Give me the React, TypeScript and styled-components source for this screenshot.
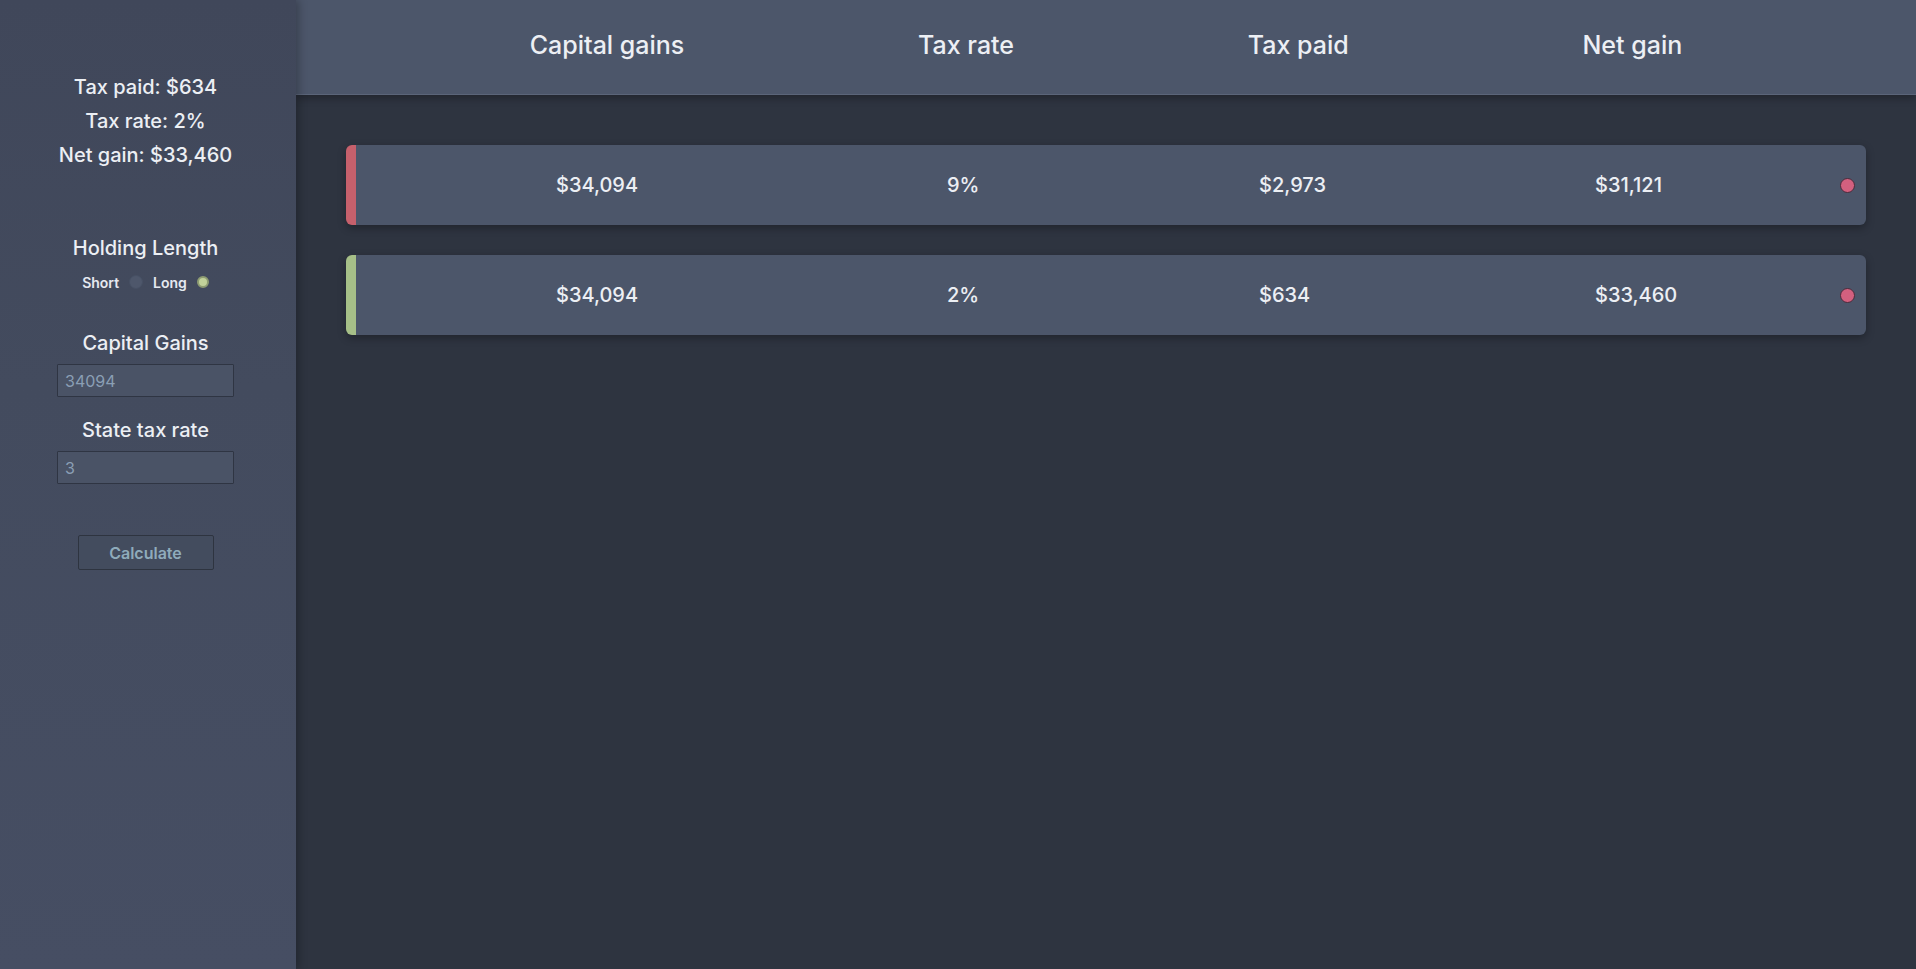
import React from "react";
import styled, { createGlobalStyle } from "styled-components";

const GlobalStyle = createGlobalStyle`
  html, body { margin: 0; padding: 0; background: #2e3440; }
  body { font-family: "Inter", "Noto Sans", sans-serif; color: #eceff4; }
  * { box-sizing: border-box; }
`;

const Page = styled.div`
  display: flex;
  min-height: 969px;
  background: #2e3440;
`;

const Sidebar = styled.aside`
  width: 296px;
  flex-shrink: 0;
  background: linear-gradient(180deg, #40475a 0%, #434b5e 40%, #464e63 100%);
  box-shadow: 3px 0 8px rgba(0, 0, 0, 0.25);
  display: flex;
  flex-direction: column;
  align-items: center;
  padding: 70px 5px 0 0;
  position: relative;
  z-index: 2;
`;

const Stats = styled.div`
  display: flex;
  flex-direction: column;
  align-items: center;
`;

const StatLine = styled.div`
  font-size: 20px;
  font-weight: 500;
  line-height: 34px;
  color: #eceff4;
`;

const SectionTitle = styled.div<{ $mt: number }>`
  margin-top: ${(p) => p.$mt}px;
  font-size: 20px;
  font-weight: 500;
  line-height: 30px;
  color: #eceff4;
`;

const RadioRow = styled.div`
  margin-top: 11px;
  height: 16px;
  display: flex;
  align-items: center;
  font-size: 14px;
  font-weight: 600;
  color: #e5e9f0;
`;

const RadioLabel = styled.span`
  margin-right: 10px;
`;

const RadioDot = styled.span<{ $on?: boolean }>`
  width: ${(p) => (p.$on ? 12 : 14)}px;
  height: ${(p) => (p.$on ? 12 : 14)}px;
  border-radius: 50%;
  background: ${(p) => (p.$on ? "#c2d29a" : "#4e576b")};
  border: ${(p) => (p.$on ? "2px solid #8e9c72" : "1px solid #465064")};
  margin-right: ${(p) => (p.$on ? 0 : 10)}px;
`;

const Field = styled.input`
  margin-top: 6px;
  width: 177px;
  height: 33px;
  background: #4a5366;
  border: 1px solid #2f3543;
  border-radius: 1px;
  padding: 0 7px;
  font-family: "Inter", "Noto Sans", sans-serif;
  font-size: 16px;
  color: #8a9fb5;
  outline: none;
`;

const CalcButton = styled.button`
  margin-top: 51px;
  width: 136px;
  height: 35px;
  background: #434c5e;
  border: 1px solid #2e3440;
  border-radius: 2px;
  font-family: "Inter", "Noto Sans", sans-serif;
  font-size: 16px;
  font-weight: 600;
  color: #8fabbb;
  cursor: pointer;
`;

const Main = styled.main`
  flex: 1;
  display: flex;
  flex-direction: column;
`;

const Header = styled.header`
  height: 95px;
  background: #4c566a;
  border-bottom: 1px solid #5b6579;
  box-shadow: 0 3px 8px rgba(0, 0, 0, 0.3);
  display: flex;
  justify-content: space-evenly;
  align-items: center;
  padding-bottom: 5px;
`;

const HeaderLabel = styled.div`
  font-size: 25px;
  font-weight: 500;
  color: #eceff4;
`;

const CardList = styled.div`
  padding: 50px 50px;
  display: flex;
  flex-direction: column;
  gap: 30px;
`;

const Card = styled.div<{ $accent: string }>`
  height: 80px;
  background: #4c566a;
  border-left: 10px solid ${(p) => p.$accent};
  border-radius: 6px;
  box-shadow: 0 3px 8px rgba(0, 0, 0, 0.3);
  display: grid;
  grid-template-columns: 391px 312px 336px 1fr 15px;
  align-items: center;
  padding-left: 200px;
  padding-right: 11px;
`;

const Value = styled.div`
  font-size: 20px;
  font-weight: 500;
  color: #eceff4;
`;

const StatusDot = styled.span`
  width: 15px;
  height: 15px;
  border-radius: 50%;
  background: #d3607f;
  border: 1px solid #4a2b3b;
`;

type Row = { accent: string; gains: string; rate: string; paid: string; net: string };

const rows: Row[] = [
  { accent: "#c6606c", gains: "$34,094", rate: "9%", paid: "$2,973", net: "$31,121" },
  { accent: "#a6bf88", gains: "$34,094", rate: "2%", paid: "$634", net: "$33,460" },
];

export default function App() {
  return (
    <>
      <GlobalStyle />
      <Page>
        <Sidebar>
          <Stats>
            <StatLine>Tax paid: $634</StatLine>
            <StatLine>Tax rate: 2%</StatLine>
            <StatLine>Net gain: $33,460</StatLine>
          </Stats>
          <SectionTitle $mt={61}>Holding Length</SectionTitle>
          <RadioRow>
            <RadioLabel>Short</RadioLabel>
            <RadioDot />
            <RadioLabel>Long</RadioLabel>
            <RadioDot $on />
          </RadioRow>
          <SectionTitle $mt={38}>Capital Gains</SectionTitle>
          <Field defaultValue="34094" />
          <SectionTitle $mt={18}>State tax rate</SectionTitle>
          <Field defaultValue="3" />
          <CalcButton>Calculate</CalcButton>
        </Sidebar>
        <Main>
          <Header>
            <HeaderLabel>Capital gains</HeaderLabel>
            <HeaderLabel>Tax rate</HeaderLabel>
            <HeaderLabel>Tax paid</HeaderLabel>
            <HeaderLabel>Net gain</HeaderLabel>
          </Header>
          <CardList>
            {rows.map((r, i) => (
              <Card key={i} $accent={r.accent}>
                <Value>{r.gains}</Value>
                <Value>{r.rate}</Value>
                <Value>{r.paid}</Value>
                <Value>{r.net}</Value>
                <StatusDot />
              </Card>
            ))}
          </CardList>
        </Main>
      </Page>
    </>
  );
}
